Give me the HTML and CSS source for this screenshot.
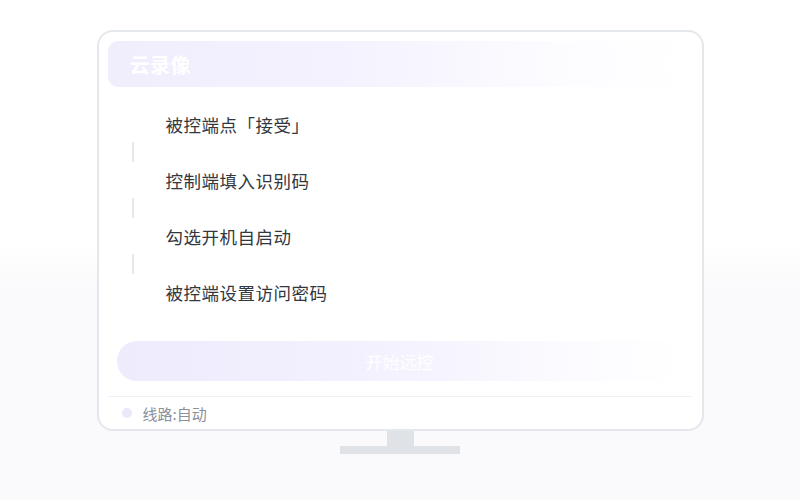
FILE: index.html
```html
<!DOCTYPE html>
<html lang="zh">
<head>
<meta charset="utf-8">
<link rel="stylesheet" href="styles.css">
</head>
<body>
<div class="stage">
  <div class="monitor">
    <div class="screen">
      <div class="header">
        <span class="title">云录像</span>
        <span class="dots"><i></i><i></i><i></i></span>
      </div>
      <div class="steps">
        <div class="step">被控端点「接受」</div>
        <div class="connector"></div>
        <div class="step">控制端填入识别码</div>
        <div class="connector"></div>
        <div class="step">勾选开机自启动</div>
        <div class="connector"></div>
        <div class="step">被控端设置访问密码</div>
      </div>
      <div class="btn">开始远控</div>
      <div class="divider"></div>
      <div class="footer">
        <span class="dot"></span>
        <span class="route">线路:自动</span>
      </div>
    </div>
    <div class="neck"></div>
    <div class="base"></div>
  </div>
</div>
</body>
</html>
```
FILE: styles.css
```css
* { box-sizing: border-box; }
html, body {
  margin: 0;
  padding: 0;
}
body {
  width: 800px;
  height: 500px;
  overflow: hidden;
  font-family: "Noto Sans CJK SC", "Noto Sans", sans-serif;
  background: linear-gradient(to bottom, #ffffff 0%, #ffffff 48%, #fafafc 58%, #fafafc 100%);
}
.stage {
  display: flex;
  justify-content: center;
  padding-top: 30px;
}
.monitor {
  width: 607px;
  display: flex;
  flex-direction: column;
  align-items: center;
}
.screen {
  width: 607px;
  height: 401px;
  border: 2px solid #e4e7ec;
  border-radius: 16px;
  background: #ffffff;
  padding: 9px 10px 0 9px;
  display: flex;
  flex-direction: column;
}
.header {
  height: 46px;
  border-radius: 10px;
  background: linear-gradient(to right, #f0eefd 0%, #f4f2fe 40%, rgba(250,249,255,0.6) 75%, rgba(255,255,255,0) 100%);
  display: flex;
  align-items: center;
  justify-content: space-between;
  padding: 0 18px 0 22px;
}
.title {
  color: #ffffff;
  font-size: 20px;
  font-weight: 700;
  letter-spacing: 0.5px;
}
.dots {
  display: flex;
  gap: 6px;
}
.dots i {
  display: block;
  width: 8px;
  height: 8px;
  border-radius: 50%;
  background: #ffffff;
}
.steps {
  margin-top: 26px;
  display: flex;
  flex-direction: column;
  padding-left: 24px;
}
.step {
  height: 24px;
  line-height: 24px;
  font-size: 17.5px;
  letter-spacing: 0.5px;
  color: #33373e;
  padding-left: 34px;
}
.connector {
  width: 2px;
  height: 20px;
  margin: 5px 0 7px 0;
  background: #e6e8ec;
}
.btn {
  margin: 36px 9px 0 9px;
  height: 40px;
  border-radius: 20px;
  background: linear-gradient(to right, #eeebfd 0%, #f3f1fe 45%, rgba(250,249,255,0.7) 80%, rgba(255,255,255,0.2) 100%);
  color: #ffffff;
  font-size: 17px;
  display: flex;
  align-items: center;
  justify-content: center;
}
.divider {
  margin-top: 15px;
  height: 1px;
  background: #eef0f3;
  margin-right: 1px;
}
.footer {
  height: 32px;
  display: flex;
  align-items: center;
  padding-left: 14px;
  gap: 11px;
}
.dot {
  width: 10px;
  height: 10px;
  border-radius: 50%;
  background: #ebe8fb;
}
.route {
  font-size: 15px;
  color: #8b909a;
}
.neck {
  width: 27px;
  height: 15px;
  background: #dfe3e8;
}
.base {
  width: 120px;
  height: 8px;
  background: #dfe3e8;
}
```
